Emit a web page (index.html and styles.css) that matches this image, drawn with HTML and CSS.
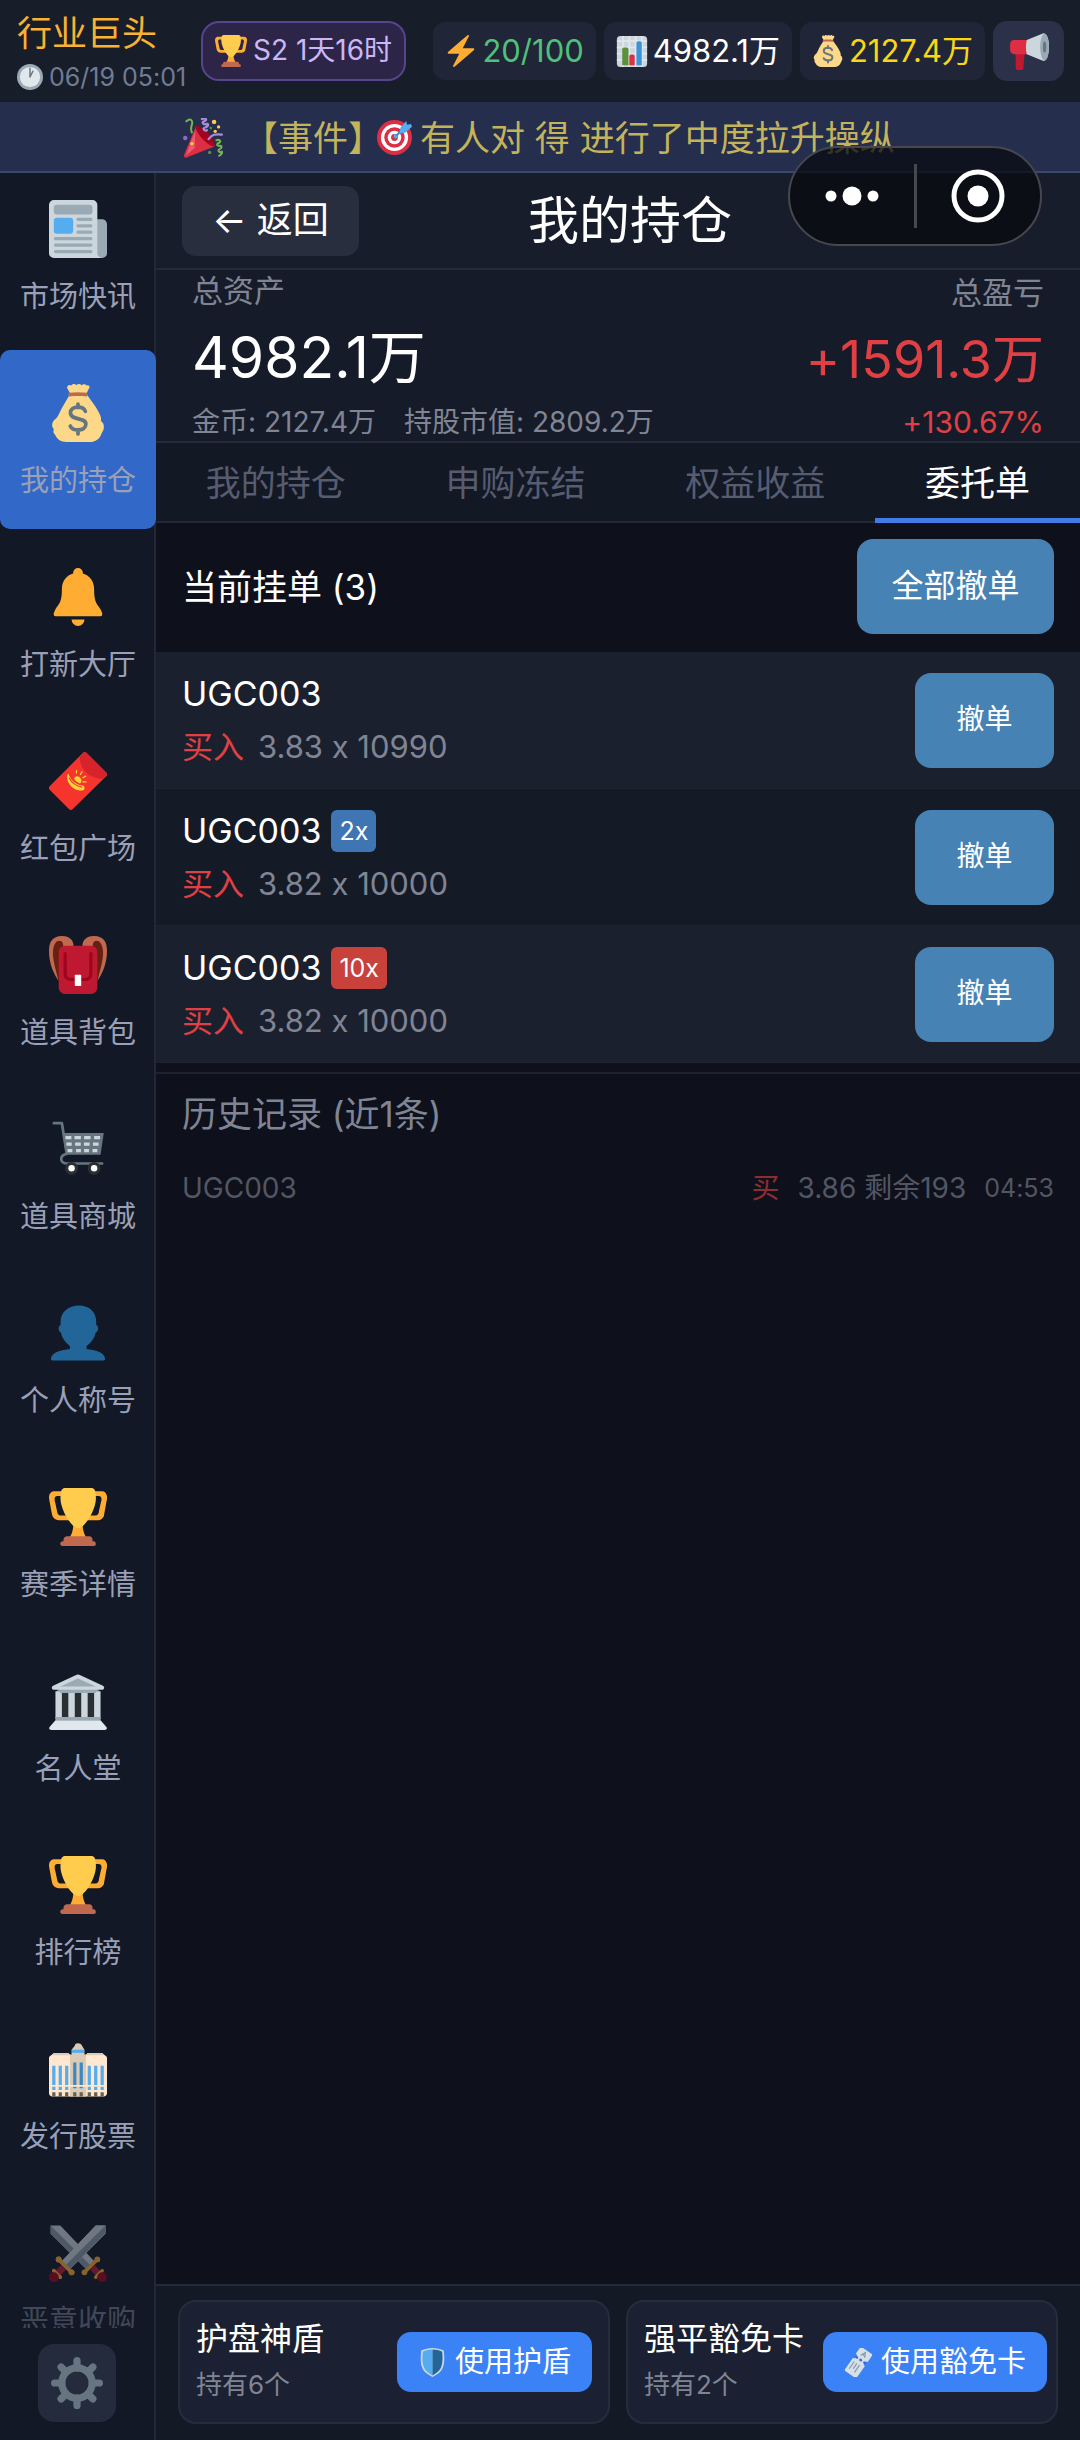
FILE: index.html
```html
<!DOCTYPE html>
<html lang="zh-CN">
<head>
    <meta charset="UTF-8">
    <meta name="viewport" content="width=device-width, initial-scale=1.0">
    <title>行业巨头</title>
    <link rel="stylesheet" href="styles.css">
</head>
<body>
    <!-- Icon sprite -->
    <svg class="sprite" aria-hidden="true">
        <symbol id="i-trophy" viewBox="0 0 36 36">
            <path fill="#FFAC33" d="M5.123 5h6C12.227 5 13 4.896 13 6V4c0-1.104-.773-2-1.877-2h-8c-2 0-3.583 2.125-3 5 0 0 1.791 9.375 1.917 9.958C2.373 18.5 4.164 20 6.081 20h6.958c1.105 0-.039-1.896-.039-3v-2c0 1.104-.773 2-1.877 2h-4c-1.104 0-1.833-1.042-2-2S3.539 7.667 3.539 7.667C3.206 5.75 4.018 5 5.123 5zm25.812 0h-6C23.831 5 22 4.896 22 6V4c0-1.104 1.831-2 2.935-2h8c2 0 3.584 2.125 3 5 0 0-1.633 9.419-1.771 10-.354 1.5-2.042 3-4 3h-7.146C21.914 20 22 18.104 22 17v-2c0 1.104 1.831 2 2.935 2h4c1.104 0 1.834-1.042 2-2s1.584-7.333 1.584-7.333C32.851 5.75 32.04 5 30.935 5zM20.832 22c0-6.958-2.709 0-2.709 0s-3-6.958-3 0-3.291 10-3.291 10h12.292c-.001 0-3.292-3.042-3.292-10z"/>
            <path fill="#FFCC4D" d="M29.123 6.577c0 6.775-6.77 18.423-11 18.423-4.231 0-11-11.649-11-18.423 0-5.577 1-6.577 3-6.577 1.791 0 5.719.016 8 .016 2.28 0 6.106-.016 8-.016 2 0 3 1 3 6.577z"/>
            <path fill="#C1694F" d="M27 33c0 1.104.227 2-.877 2h-16C9.018 35 9 34.104 9 33v-1c0-1.104 1.164-2 2.206-2h13.917c1.042 0 1.877.896 1.877 2v1z"/>
            <path fill="#C1694F" d="M29 34.625c0 .76.165 1.375-1.252 1.375H8.498C7.206 36 7 35.385 7 34.625v-.25C7 33.615 7.738 33 8.498 33h19.25c.759 0 1.252.615 1.252 1.375v.25z"/>
        </symbol>
        <symbol id="i-bolt" viewBox="0 0 36 36">
            <path fill="#FFAC33" d="M32.938 15.651C32.792 15.26 32.418 15 32 15H19.925L26.89 1.458c.219-.426.106-.947-.271-1.243C26.437.071 26.218 0 26 0c-.233 0-.466.082-.653.243L18 6.588 3.347 19.243c-.316.273-.43.714-.284 1.105S3.582 21 4 21h12.075L9.11 34.542c-.219.426-.106.947.271 1.243.182.144.401.215.619.215.233 0 .466-.082.653-.243L18 29.412l14.653-12.655c.317-.273.43-.714.285-1.106z"/>
        </symbol>
        <symbol id="i-clock" viewBox="0 0 36 36">
            <circle fill="#99AAB5" cx="18" cy="18" r="18"/>
            <circle fill="#E1E8ED" cx="18" cy="18" r="14"/>
            <path fill="none" stroke="#66757F" stroke-width="2" stroke-linecap="round" d="M18 18V6M18 18l4-8"/>
        </symbol>
        <symbol id="i-chart" viewBox="0 0 36 36">
            <rect width="34" height="35" x="1" y="1" rx="4" fill="#CCD6DD"/>
            <path fill="none" stroke="#E1E8ED" stroke-width="2" d="M1 7h34M1 14h34M1 21h34M1 28h34M8 1v35M15 1v35M22 1v35M29 1v35"/>
            <path fill="#5C913B" d="M7 16a2 2 0 0 1 2-2h3a2 2 0 0 1 2 2v18H7z"/>
            <path fill="#DD2E44" d="M15 24a2 2 0 0 1 2-2h2a2 2 0 0 1 2 2v10h-6z"/>
            <path fill="#3B94D9" d="M23 9a2 2 0 0 1 2-2h2a2 2 0 0 1 2 2v25h-6z"/>
        </symbol>
        <symbol id="i-bag" viewBox="0 0 36 36">
            <path fill="#FDD888" d="M11.5 3c-1-1.700 1-3.200 2.400-2 .8-1.200 2.400-1.200 3.100-.2.800-1 2.400-1 3.200 0 1-1 2.600-.9 3 .2C25 .2 25.700 2 24.700 3l-1.500 3c3 4.500 7 9 8.800 14 .5 1.500.2 2.500.3 3 1.300 1 1.900 2.300 1.700 4 .2 1.500-.8 2.500-1.500 4-1 3-3.500 5-7.500 5H11c-4 0-6.200-2-7.200-4.500-1.200-1-1.200-2.300-.8-3.500-1.500-1.500-1.400-4 .4-5.800 1.500-1 2.100-2.200 3.100-4.200C8.200 14 11 10 13.200 6z"/>
            <path fill="#BF6952" d="M12.500 5.500c3.500-.5 7.500-.5 11 0 .8.800.7 1.500 0 2.200-3.500-.4-7.500-.4-11 0-.7-.7-.8-1.500 0-2.200z"/>
            <path fill="none" stroke="#67757F" stroke-width="2.300" stroke-linecap="round" d="M22.600 17c-.8-2-2.600-2.600-4.600-2.600-3 0-4.700 1.500-4.700 3.500 0 5 9.600 2.500 9.600 7 0 2.300-1.900 3.600-4.900 3.600-2.200 0-4-.8-4.800-2.400M18 12.500v2M18 28.500v2.500"/>
        </symbol>
        <symbol id="i-horn" viewBox="0 0 36 36">
            <path fill="#BE1931" d="M6 20h8l-1 13a2 2 0 0 1-2 2H8a2 2 0 0 1-2-2z"/>
            <path fill="#DD2E44" d="M4 8h14v13H5a4 4 0 0 1-4-4v-5a4 4 0 0 1 3-4z"/>
            <path fill="#CCD6DD" d="M16 8 31 2c3 0 5 5 5 12s-2 13-5 13l-15-6c-1-4-1-9 0-13z"/>
            <ellipse cx="32" cy="14.500" rx="4" ry="12" fill="#99AAB5"/>
            <ellipse cx="32" cy="14.500" rx="1.500" ry="5" fill="#66757F"/>
        </symbol>
        <symbol id="i-party" viewBox="0 0 36 36">
            <path fill="#DD2E44" d="M11.600 7.600 1 33c-.7 2 .6 3.200 2.200 2.500l24.500-9.700c2-1-1-6.500-6-11.500s-9.300-8-10.100-6.700z"/>
            <path fill="#A0041E" d="M12 7.500c2-1.500 7 2 11 6s6.500 9.500 5 11.500c-2 1.500-6.500-2-10.500-6.300C13.500 14.500 10.500 9 12 7.500z"/>
            <path fill="#EA596E" d="M11 11 2.500 34l8-7z"/>
            <path fill="none" stroke="#77B255" stroke-width="1.800" stroke-linecap="round" d="M3 3c4-3.500 6-.5 5 3-1 3-1 5 0 7M30 20c3-1 5 1 2 2.500s0 3 1.500 2.500 2 2-.5 3 0 3.500 1.500 2.500 1 2-2 3.500"/>
            <path fill="none" stroke="#AA8DD8" stroke-width="2" stroke-linecap="round" d="M17 1c4-1.500 5 1 2 2s0 3.500 2 2.500 2.500 2-1 3 0 3.500 1.500 2.500M23 19c3-4 6-5 12-4"/>
            <circle cx="8" cy="23" r="1.500" fill="#FFCC4D"/><circle cx="28" cy="3.500" r="2" fill="#FFCC4D"/>
            <circle cx="32" cy="8" r="1.500" fill="#FFCC4D"/><circle cx="29" cy="12" r="1.500" fill="#FFCC4D"/>
            <circle cx="2" cy="18" r="2" fill="#9266CC"/><circle cx="25" cy="9" r="1.200" fill="#5C913B"/><circle cx="24" cy="31" r="1.500" fill="#5C913B"/>
        </symbol>
        <symbol id="i-target" viewBox="0 0 36 36">
            <circle fill="#DD2E44" cx="18" cy="18" r="18"/>
            <circle fill="#FFF" cx="18" cy="18" r="14"/>
            <circle fill="#DD2E44" cx="18" cy="18" r="10.500"/>
            <circle fill="#FFF" cx="18" cy="18" r="7"/>
            <circle fill="#DD2E44" cx="18" cy="18" r="3.500"/>
            <path fill="none" stroke="#3B88C3" stroke-width="2" stroke-linecap="round" d="m18 18 11-11"/>
            <path fill="#55ACEE" d="m24 8 6-7 1 4 4-1 1 3-7 6-6 1zM18 14l4 4-3 1-2-2z"/>
        </symbol>
        <symbol id="i-news" viewBox="0 0 36 36">
            <path fill="#99AAB5" d="M28 12h5a3 3 0 0 1 3 3v18a3 3 0 0 1-3 3h-5z"/>
            <path fill="#CCD6DD" d="M3 0h24a3 3 0 0 1 3 3v30a3 3 0 0 0 3 3H3a3 3 0 0 1-3-3V3a3 3 0 0 1 3-3z"/>
            <rect x="3" y="3" width="24" height="6" rx="2" fill="#99AAB5"/>
            <rect x="3" y="11" width="12" height="10" rx="2" fill="#55ACEE"/>
            <path fill="none" stroke="#99AAB5" stroke-width="2" stroke-linecap="round" d="M18 12h8M18 16h8M18 20h8M4 24h22M4 28h22M4 32h22"/>
        </symbol>
        <symbol id="i-bell" viewBox="0 0 36 36">
            <circle cx="18" cy="3" r="3" fill="#FFAC33"/>
            <path fill="#FFAC33" d="M8 13C8 7 12.500 3 18 3s10 4 10 10c0 9 2 9 4.200 13 1.600 3 .8 4-.7 4h-27c-1.500 0-2.300-1-.7-4C6 22 8 22 8 13zM14 32h8a4 4 0 0 1-8 0z"/>
        </symbol>
        <symbol id="i-envelope" viewBox="0 0 36 36">
            <path fill="#F4342D" d="M.4 21.200 21 .6c.7-.7 1.700-.7 2.400 0L35.500 12.700c.7.700.7 1.700 0 2.400L14.800 35.400c-.7.700-1.700.7-2.400 0L.4 23.400c-.6-.7-.6-1.500 0-2.200z"/>
            <path fill="#D7232C" d="m19 2.600 2-2c.7-.7 1.700-.7 2.400 0L35.500 12.700c.7.700.7 1.700 0 2.400l-1.800 1.600C25 16.500 19 11 19 2.600z"/>
            <path fill="#FFD43B" d="M12 13.500c1.500 4 4.500 7 9.500 7.500 2 3-1.500 3.500-4.500 2.500-3.500-1.500-6-5-5.700-8 0-1 .2-1.500.7-2zM15.500 16.500c1-2 3-1.700 4.200 0 .8 1.300.6 2.300-.5 3-1.500-.5-3-1.500-3.700-3z"/>
            <path fill="none" stroke="#FFD43B" stroke-width=".8" stroke-linecap="round" d="m17 13 .2-1.500M19.500 14l1-1.800M21 16l1.800-1M21 18.500h2"/>
            <path fill="none" stroke="#F4342D" stroke-width=".7" d="M12.500 16c1.500 3 4.500 5.200 8 5.800"/>
        </symbol>
        <symbol id="i-backpack" viewBox="0 0 36 36">
            <path fill="#662113" d="M4 2C1 4 0 8 2 16s4 10 5 13l4-2V8C10 2 7 1 4 2zM32 2c3 2 4 6 2 14s-4 10-5 13l-4-2V8c1-6 4-7 7-6z"/>
            <path fill="#C1694F" d="M15 8c1-4-1-8-7-8S0 4 0 9c0 7 2 13 6 19C4 20 2 14 2.500 9 3 5 4.500 3 6.500 3 8.500 3 9 5 9 8zM21 8c-1-4 1-8 7-8s8 4 8 9c0 7-2 13-6 19 2-8 4-14 3.500-19-.5-4-2-6-4-6-2 0-2.500 2-2.500 5z"/>
            <rect x="6" y="6" width="24" height="30" rx="4" fill="#BE1931"/>
            <path fill="none" stroke="#A0041E" stroke-width="2" stroke-linecap="round" d="M10 11v12c0 3 1 4 4 4h8c3 0 4-1 4-4V11"/>
            <rect x="16" y="24" width="4" height="7" rx=".5" fill="#FFF"/>
        </symbol>
        <symbol id="i-cart" viewBox="0 0 36 36">
            <path fill="none" stroke="#66757F" stroke-width="1.700" stroke-linecap="round" stroke-linejoin="round" d="M3 2h5l3 19c-5 1-4 6 0 6h22"/>
            <path fill="#66757F" d="M8.500 8H34l-2 13.500H10.500z"/>
            <path fill="none" stroke="#CCD6DD" stroke-width="2" d="M10.200 11h3.700M15.800 11h4M21.800 11h4M28 11h3.700M10.800 15h3.300M16.200 15h3.500M21.700 15h3.500M27.300 15h3.500M11.500 19h3M16.800 19h3M21.800 19h3M27 19h3"/>
            <circle cx="14" cy="30" r="4" fill="#292F33"/><circle cx="28" cy="30" r="4" fill="#292F33"/>
            <circle cx="14" cy="30" r="2" fill="#FFF"/><circle cx="28" cy="30" r="2" fill="#FFF"/>
        </symbol>
        <symbol id="i-person" viewBox="0 0 36 36">
            <path fill="#269" d="M18.600 1C25 1 29.300 5 29.300 11v2c1.600.5 1.600 4-.3 4.700-.6 3-2.500 6.200-5.700 8.300v2c5 .6 11.500 2 11.500 6.200 0 .6-.3 .8-.8 .8H2c-.6 0-.8-.3-.8-.8 0-4.200 6.800-5.600 11.800-6.200v-2c-3-2-5-5.300-5.600-8.300-1.800-.7-1.800-4.200-.2-4.700v-2c0-6 5-10 11.400-10z"/>
        </symbol>
        <symbol id="i-bank" viewBox="0 0 36 36">
            <path fill="#292F33" d="M5 12h26v17H5z"/>
            <path fill="#66757F" d="M5 11h26v2H5z"/>
            <path fill="#CCD6DD" d="M4 12h4v17H4zM12 12h4v17h-4zM20 12h4v17h-4zM28 12h4v17h-4z"/>
            <path fill="#99AAB5" d="M4 28h28v2H4zM5 10h26l-2 3H7z"/>
            <path fill="#CCD6DD" d="M18 1.500c.5 0 1 .2 1.500.5l14 6.500c1.300.8.8 2.500-.5 2.500H3c-1.300 0-1.800-1.700-.5-2.500l14-6.500c.5-.3 1-.5 1.500-.5z"/>
            <path fill="#99AAB5" d="m18 4 11 5H7z"/>
            <path fill="#E1E8ED" d="M4 30h28l3.500 4c1 1.300 0 2-1 2h-33c-1 0-2-.7-1-2z"/>
        </symbol>
        <symbol id="i-building" viewBox="0 0 36 36">
            <path fill="#D9CBB6" d="M16 3.500C16 2.500 17 2 18 2s2 .5 2.500 1.500L22 6v5h-8V6z"/>
            <path fill="#55ACEE" d="M14.300 6h7.400v2h-7.400z"/>
            <path fill="#FFE8CF" d="M0 11c0-1 2-2 3-3h9l2 2h8l2-2h9c1 1 3 2 3 3v22c0 1-1 2-2 2H2c-1 0-2-1-2-2z"/>
            <path fill="#D9CBB6" d="M13 9h10v26H13zM2 9.500 3 8h9l1 1.500zM23 9.500 24 8h9l1 1.500z"/>
            <path fill="none" stroke="#55ACEE" stroke-width="2" d="M3 16v12M7 16v12M11 16v12M25 16v12M29 16v12M33 16v12"/>
            <path fill="none" stroke="#3B88C3" stroke-width="2" d="M16 14v16M20 14v16"/>
            <path fill="none" stroke="#FFE8CF" stroke-width="1" d="M1 28.500h34"/>
            <path fill="none" stroke="#55ACEE" stroke-width="2" d="M3 29v2M7 29v2M11 29v2M25 29v2M29 29v2M33 29v2"/>
            <path fill="none" stroke="#66604F" stroke-width="2" d="M3 32.500V35M7 32.500V35M11 32.500V35M16 32.500V35M20 32.500V35M25 32.500V35M29 32.500V35M33 32.500V35"/>
        </symbol>
        <symbol id="i-swords" viewBox="0 0 36 36">
            <g id="sword">
                <path fill="#CCD6DD" d="M29 1h6v5L13 28l-5-5z"/>
                <path fill="#8899A6" d="M35 1v5L13 28l-2.500-2.500z"/>
                <path fill="none" stroke="#BE1931" stroke-width="4" d="m9 27-6 6"/>
                <path fill="none" stroke="#FFAC33" stroke-width="2.200" stroke-linecap="round" d="m6 22 8 8M3 29l4 4"/>
                <circle cx="3" cy="33" r="3" fill="#A0041E"/>
                <circle cx="6" cy="22" r="1.800" fill="#FFAC33"/><circle cx="14" cy="30" r="1.800" fill="#FFAC33"/>
            </g>
            <use href="#sword" transform="matrix(-1 0 0 1 36 0)"/>
            <use href="#sword"/>
        </symbol>
        <symbol id="i-gear" viewBox="0 0 36 36">
            <g fill="none" stroke="#66757F">
                <circle cx="18" cy="18" r="10.500" stroke-width="5"/>
                <path stroke-width="5" stroke-linecap="round" d="M18 2.500v5M18 28.500v5M2.500 18h5M28.500 18h5M7 7l3.500 3.500M25.500 25.500 29 29M29 7l-3.500 3.500M10.500 25.500 7 29"/>
            </g>
        </symbol>
        <symbol id="i-shield" viewBox="0 0 36 36">
            <path fill="#CCD6DD" d="M18 0c5 0 10 1.500 14 3 1 8 1 16-1 21-2 6-7 9-13 12C12 33 7 30 5 24 3 19 3 11 4 3c4-1.500 9-3 14-3z"/>
            <path fill="#55ACEE" d="M18 2C13.500 2 9.500 3 6 4.500 5.300 12 5.300 18 7 23c1.600 5 5.500 8 11 11z"/>
            <path fill="#226699" d="M18 2c4.500 0 8.500 1 12 2.500.7 7.500.7 13.500-1 18.500-1.600 5-5.500 8-11 11z"/>
        </symbol>
        <symbol id="i-ticket" viewBox="0 0 36 36">
            <g transform="rotate(35 18 18)">
                <path fill="#D5E0E8" d="M11 0h14a2 2 0 0 1 2 2v9a3 3 0 0 0 0 6v17a2 2 0 0 1-2 2H11a2 2 0 0 1-2-2V17a3 3 0 0 0 0-6V2a2 2 0 0 1 2-2z"/>
                <path fill="none" stroke="#3B6FC4" stroke-width="3" stroke-linecap="round" stroke-dasharray="1 5" d="M12 14h13"/>
                <path fill="none" stroke="#8899A6" stroke-width="1.500" d="M13 20v11M17 20v8M21 20v11M15 9l3-6 3 6M16 7h4"/>
            </g>
        </symbol>
    </svg>

    <header class="topbar">
        <div class="brand">
            <h1 class="brand-name">行业巨头</h1>
            <div class="brand-time"><svg class="icon-sm"><use href="#i-clock"/></svg><span>06/19 05:01</span></div>
        </div>
        <div class="season"><svg class="icon-md"><use href="#i-trophy"/></svg><span>S2 1天16时</span></div>
        <div class="resources">
            <div class="pill energy"><svg class="icon-md"><use href="#i-bolt"/></svg><span>20/100</span></div>
            <div class="pill"><svg class="icon-md"><use href="#i-chart"/></svg><span>4982.1万</span></div>
            <div class="pill gold"><svg class="icon-md"><use href="#i-bag"/></svg><span>2127.4万</span></div>
            <button class="notice-btn" type="button" aria-label="公告"><svg class="icon-lg"><use href="#i-horn"/></svg></button>
        </div>
    </header>

    <div class="ticker">
        <svg class="icon-lg"><use href="#i-party"/></svg>
        <p class="ticker-text"><span>【事件】</span><svg class="icon-target"><use href="#i-target"/></svg><span>有人对 得 进行了中度拉升操纵</span></p>
    </div>

    <div class="capsule">
        <button type="button" aria-label="更多">
            <svg class="capsule-icon" viewBox="0 0 56 56" fill="#fff"><circle cx="7" cy="28" r="5.500"/><circle cx="28" cy="28" r="9.500"/><circle cx="49" cy="28" r="5.500"/></svg>
        </button>
        <button type="button" aria-label="关闭">
            <svg class="capsule-icon" viewBox="0 0 56 56"><circle cx="28" cy="28" r="24" fill="none" stroke="#fff" stroke-width="5"/><circle cx="28" cy="28" r="10.500" fill="#fff"/></svg>
        </button>
    </div>

    <div class="layout">
        <aside class="sidebar">
            <nav class="side-list">
                <a class="side-item" href="#"><svg class="side-icon"><use href="#i-news"/></svg><span>市场快讯</span></a>
                <a class="side-item active" href="#"><svg class="side-icon"><use href="#i-bag"/></svg><span>我的持仓</span></a>
                <a class="side-item" href="#"><svg class="side-icon"><use href="#i-bell"/></svg><span>打新大厅</span></a>
                <a class="side-item" href="#"><svg class="side-icon"><use href="#i-envelope"/></svg><span>红包广场</span></a>
                <a class="side-item" href="#"><svg class="side-icon"><use href="#i-backpack"/></svg><span>道具背包</span></a>
                <a class="side-item" href="#"><svg class="side-icon"><use href="#i-cart"/></svg><span>道具商城</span></a>
                <a class="side-item" href="#"><svg class="side-icon"><use href="#i-person"/></svg><span>个人称号</span></a>
                <a class="side-item" href="#"><svg class="side-icon"><use href="#i-trophy"/></svg><span>赛季详情</span></a>
                <a class="side-item" href="#"><svg class="side-icon"><use href="#i-bank"/></svg><span>名人堂</span></a>
                <a class="side-item" href="#"><svg class="side-icon"><use href="#i-trophy"/></svg><span>排行榜</span></a>
                <a class="side-item" href="#"><svg class="side-icon"><use href="#i-building"/></svg><span>发行股票</span></a>
                <a class="side-item locked" href="#"><svg class="side-icon"><use href="#i-swords"/></svg><span>恶意收购</span></a>
            </nav>
            <button class="settings-btn" type="button" aria-label="设置"><svg class="gear-icon"><use href="#i-gear"/></svg></button>
        </aside>

        <main class="main">
            <div class="page-head">
                <button class="back-btn" type="button">← 返回</button>
                <h2 class="page-title">我的持仓</h2>
            </div>

            <section class="summary">
                <div class="summary-col">
                    <span class="summary-label">总资产</span>
                    <strong class="summary-value">4982.1万</strong>
                    <div class="summary-sub"><span>金币: 2127.4万</span><span>持股市值: 2809.2万</span></div>
                </div>
                <div class="summary-col right">
                    <span class="summary-label">总盈亏</span>
                    <strong class="summary-value profit up">+1591.3万</strong>
                    <span class="summary-rate up">+130.67%</span>
                </div>
            </section>

            <div class="tabs">
                <button class="tab" type="button">我的持仓</button>
                <button class="tab" type="button">申购冻结</button>
                <button class="tab" type="button">权益收益</button>
                <button class="tab active" type="button">委托单</button>
            </div>

            <section class="content">
                <div class="orders-head">
                    <h3>当前挂单 (3)</h3>
                    <button class="cancel-all" type="button">全部撤单</button>
                </div>
                <div class="order">
                    <div class="order-info">
                        <div class="order-name">UGC003</div>
                        <div class="order-detail"><span class="up">买入</span><span>3.83 x 10990</span></div>
                    </div>
                    <button class="cancel" type="button">撤单</button>
                </div>
                <div class="order">
                    <div class="order-info">
                        <div class="order-name">UGC003<span class="lever">2x</span></div>
                        <div class="order-detail"><span class="up">买入</span><span>3.82 x 10000</span></div>
                    </div>
                    <button class="cancel" type="button">撤单</button>
                </div>
                <div class="order">
                    <div class="order-info">
                        <div class="order-name">UGC003<span class="lever high">10x</span></div>
                        <div class="order-detail"><span class="up">买入</span><span>3.82 x 10000</span></div>
                    </div>
                    <button class="cancel" type="button">撤单</button>
                </div>

                <div class="history">
                    <h3>历史记录 (近1条)</h3>
                    <div class="history-row">
                        <span class="history-name">UGC003</span>
                        <span class="up">买</span>
                        <span>3.86 剩余193</span>
                        <span class="history-time">04:53</span>
                    </div>
                </div>
            </section>

            <footer class="items-bar">
                <div class="item-card">
                    <div class="item-text"><div class="item-name">护盘神盾</div><div class="item-count">持有6个</div></div>
                    <button class="use-btn" type="button"><svg class="icon-use"><use href="#i-shield"/></svg>使用护盾</button>
                </div>
                <div class="item-card">
                    <div class="item-text"><div class="item-name">强平豁免卡</div><div class="item-count">持有2个</div></div>
                    <button class="use-btn" type="button"><svg class="icon-use"><use href="#i-ticket"/></svg>使用豁免卡</button>
                </div>
            </footer>
        </main>
    </div>
</body>
</html>
```
FILE: styles.css
```css
* {
    box-sizing: border-box;
}
body {
    margin: 0;
    height: 100vh;
    display: flex;
    flex-direction: column;
    overflow: hidden;
    position: relative;
    background: #0e101b;
    color: #fff;
    font-family: 'Inter', 'Noto Sans CJK SC', sans-serif;
    font-size: 32px;
    font-variant-ligatures: no-contextual;
    line-height: 1.2;
}
h1, h2, h3, p {
    margin: 0;
    font-weight: 400;
}
button {
    border: none;
    padding: 0;
    color: #fff;
    font-family: inherit;
    line-height: inherit;
    cursor: pointer;
}
a {
    color: inherit;
    text-decoration: none;
}
svg {
    display: block;
    flex-shrink: 0;
}
.sprite {
    position: absolute;
    width: 0;
    height: 0;
}
.icon-sm { width: 26px; height: 26px; }
.icon-md { width: 32px; height: 32px; }
.icon-lg { width: 40px; height: 40px; }
.icon-target { width: 35px; height: 35px; }
.icon-use { width: 29px; height: 29px; }

/* Top bar */
.topbar {
    flex-shrink: 0;
    height: 102px;
    display: flex;
    align-items: center;
    padding: 0 16px 0 17px;
    background: #181d2a;
    white-space: nowrap;
}
.brand {
    width: 184px;
    flex-shrink: 0;
    padding-top: 4px;
}
.brand-name {
    font-size: 35px;
    line-height: 48px;
    color: #f9b233;
}
.brand-time {
    display: flex;
    align-items: center;
    gap: 6px;
    font-size: 25px;
    line-height: 40px;
    color: #717b94;
}
.season {
    height: 60px;
    display: flex;
    align-items: center;
    gap: 6px;
    padding: 0 12px;
    border: 2px solid #54458d;
    border-radius: 18px;
    background: #2d2547;
    color: #c9b8f5;
    font-size: 28px;
}
.resources {
    display: flex;
    align-items: center;
    gap: 8px;
    margin-left: auto;
}
.pill {
    height: 58px;
    display: flex;
    align-items: center;
    gap: 5px;
    padding: 0 12px;
    border-radius: 12px;
    background: #202637;
    font-size: 31px;
}
.energy { color: #50c07a; }
.gold { color: #fad714; }
.notice-btn {
    width: 71px;
    height: 60px;
    display: flex;
    align-items: center;
    justify-content: center;
    border-radius: 14px;
    background: #2a3148;
}

/* Event ticker */
.ticker {
    flex-shrink: 0;
    height: 71px;
    display: flex;
    align-items: center;
    gap: 20px;
    padding: 2px 183px 0;
    border-bottom: 2px solid #3b4770;
    background: #252e4c;
}
.ticker-text {
    display: flex;
    align-items: center;
    white-space: nowrap;
    font-size: 35px;
    color: #c3b35d;
}
.ticker-text .icon-target {
    margin: 0 8px 0 -6px;
}

/* Floating capsule */
.capsule {
    position: absolute;
    top: 146px;
    right: 38px;
    z-index: 5;
    width: 254px;
    height: 100px;
    display: flex;
    align-items: center;
    border: 2px solid #46474f;
    border-radius: 50px;
    background: rgba(8, 9, 16, 0.75);
}
.capsule button {
    flex: 1;
    height: 64px;
    display: flex;
    align-items: center;
    justify-content: center;
    background: none;
}
.capsule button + button {
    border-left: 3px solid #46474f;
}
.capsule-icon {
    width: 56px;
    height: 56px;
}

.layout {
    flex: 1;
    min-height: 0;
    display: flex;
}

/* Sidebar */
.sidebar {
    width: 156px;
    flex-shrink: 0;
    display: flex;
    flex-direction: column;
    align-items: center;
    padding-bottom: 18px;
    border-right: 2px solid #222838;
    background: #121825;
}
.side-list {
    flex: 1;
    min-height: 0;
    width: 156px;
    margin-right: -2px;
    overflow: hidden;
}
.side-item {
    height: 179px;
    display: flex;
    flex-direction: column;
    align-items: center;
    gap: 20px;
    margin-bottom: 5px;
    padding-top: 34px;
    border-radius: 10px;
    color: #9aa0b8;
    font-size: 29px;
    line-height: 38px;
}
.side-item:first-child {
    margin-top: -7px;
}
.side-item.active {
    background: #3269c8;
}
.side-item.locked {
    opacity: 0.5;
}
.side-item.locked span {
    opacity: 0.7;
}
.side-icon {
    width: 58px;
    height: 58px;
}
.settings-btn {
    width: 78px;
    height: 78px;
    flex-shrink: 0;
    display: flex;
    align-items: center;
    justify-content: center;
    margin-top: 16px;
    border-radius: 16px;
    background: #242b3c;
}
.gear-icon {
    width: 52px;
    height: 52px;
}

/* Main */
.main {
    flex: 1;
    min-width: 0;
    display: flex;
    flex-direction: column;
}
.page-head {
    height: 97px;
    flex-shrink: 0;
    display: flex;
    align-items: center;
    padding: 0 179px 0 26px;
    border-bottom: 2px solid #252a3a;
    background: #181d2b;
}
.back-btn {
    width: 177px;
    height: 70px;
    border-radius: 14px;
    background: #292e3e;
    font-size: 36px;
}
.page-title {
    flex: 1;
    text-align: center;
    font-size: 51px;
}
.summary {
    height: 173px;
    flex-shrink: 0;
    display: flex;
    align-items: center;
    justify-content: space-between;
    padding: 2px 36px 0;
    border-bottom: 2px solid #262b3a;
    background: #161b29;
}
.summary-col {
    display: flex;
    flex-direction: column;
}
.summary-col.right {
    align-items: flex-end;
}
.summary-label {
    font-size: 31px;
    line-height: 34px;
    color: #808594;
}
.summary-value {
    padding-top: 4px;
    font-size: 57px;
    line-height: 92px;
    font-weight: 400;
}
.summary-value.profit {
    font-size: 52px;
}
.summary-sub {
    display: flex;
    gap: 28px;
    font-size: 28px;
    line-height: 36px;
    color: #808594;
}
.summary-rate {
    font-size: 30px;
    line-height: 32px;
}
.up { color: #e04043; }

.tabs {
    height: 80px;
    flex-shrink: 0;
    display: flex;
    border-bottom: 2px solid #222736;
    background: #131825;
}
.tab {
    flex: 1 1 auto;
    margin-bottom: -2px;
    padding-top: 4px;
    border-bottom: 5px solid transparent;
    background: none;
    color: #575c70;
    font-size: 35px;
}
.tab.active {
    border-color: #437ce6;
    color: #fff;
}

/* Orders */
.content {
    flex: 1;
    min-height: 0;
}
.orders-head {
    display: flex;
    align-items: center;
    justify-content: space-between;
    padding: 16px 26px 18px;
}
.orders-head h3 {
    font-size: 35px;
}
.cancel-all,
.cancel {
    height: 95px;
    border-radius: 16px;
    background: #4682b4;
}
.cancel-all {
    width: 197px;
    font-size: 32px;
}
.cancel {
    width: 139px;
    font-size: 28px;
}
.order {
    display: flex;
    align-items: center;
    justify-content: space-between;
    padding: 20px 26px;
    border-bottom: 1px solid #1e2332;
    background: #1b202f;
}
.order:nth-child(odd) {
    background: #151a27;
}
.order-name {
    display: flex;
    align-items: center;
    gap: 10px;
    font-size: 34px;
    line-height: 44px;
}
.order-detail {
    display: flex;
    gap: 14px;
    margin-top: 10px;
    font-size: 31px;
    line-height: 42px;
}
.order-detail span + span {
    color: #808594;
}
.lever {
    padding: 0 8px;
    border-radius: 6px;
    background: #4075b3;
    font-size: 25px;
    line-height: 42px;
}
.lever.high {
    background: #c8413a;
}

.history {
    margin-top: 9px;
    padding: 20px 26px;
    border-top: 2px solid #1e2230;
}
.history h3 {
    font-size: 35px;
    line-height: 40px;
    color: #808594;
}
.history-row {
    display: flex;
    align-items: center;
    gap: 18px;
    margin-top: 34px;
    font-size: 28px;
    line-height: 40px;
    color: #808594;
    opacity: 0.6;
}
.history-name {
    flex: 1;
}
.history-time {
    font-size: 25px;
}

/* Bottom items */
.items-bar {
    flex-shrink: 0;
    display: grid;
    grid-template-columns: 1fr 1fr;
    gap: 16px;
    padding: 14px 22px 16px;
    border-top: 2px solid #252a3a;
    background: #141926;
}
.item-card {
    height: 124px;
    display: flex;
    align-items: center;
    justify-content: space-between;
    padding: 0 9px 0 16px;
    border: 2px solid #272c3d;
    border-radius: 18px;
    background: #1b2132;
    white-space: nowrap;
}
.item-card:first-child {
    padding-right: 16px;
}
.item-name {
    font-size: 32px;
    line-height: 46px;
}
.item-count {
    font-size: 26px;
    line-height: 46px;
    color: #808594;
}
.use-btn {
    height: 60px;
    display: flex;
    align-items: center;
    gap: 8px;
    padding: 0 21px;
    border-radius: 14px;
    background: #3b82f6;
    font-size: 29px;
}
```
